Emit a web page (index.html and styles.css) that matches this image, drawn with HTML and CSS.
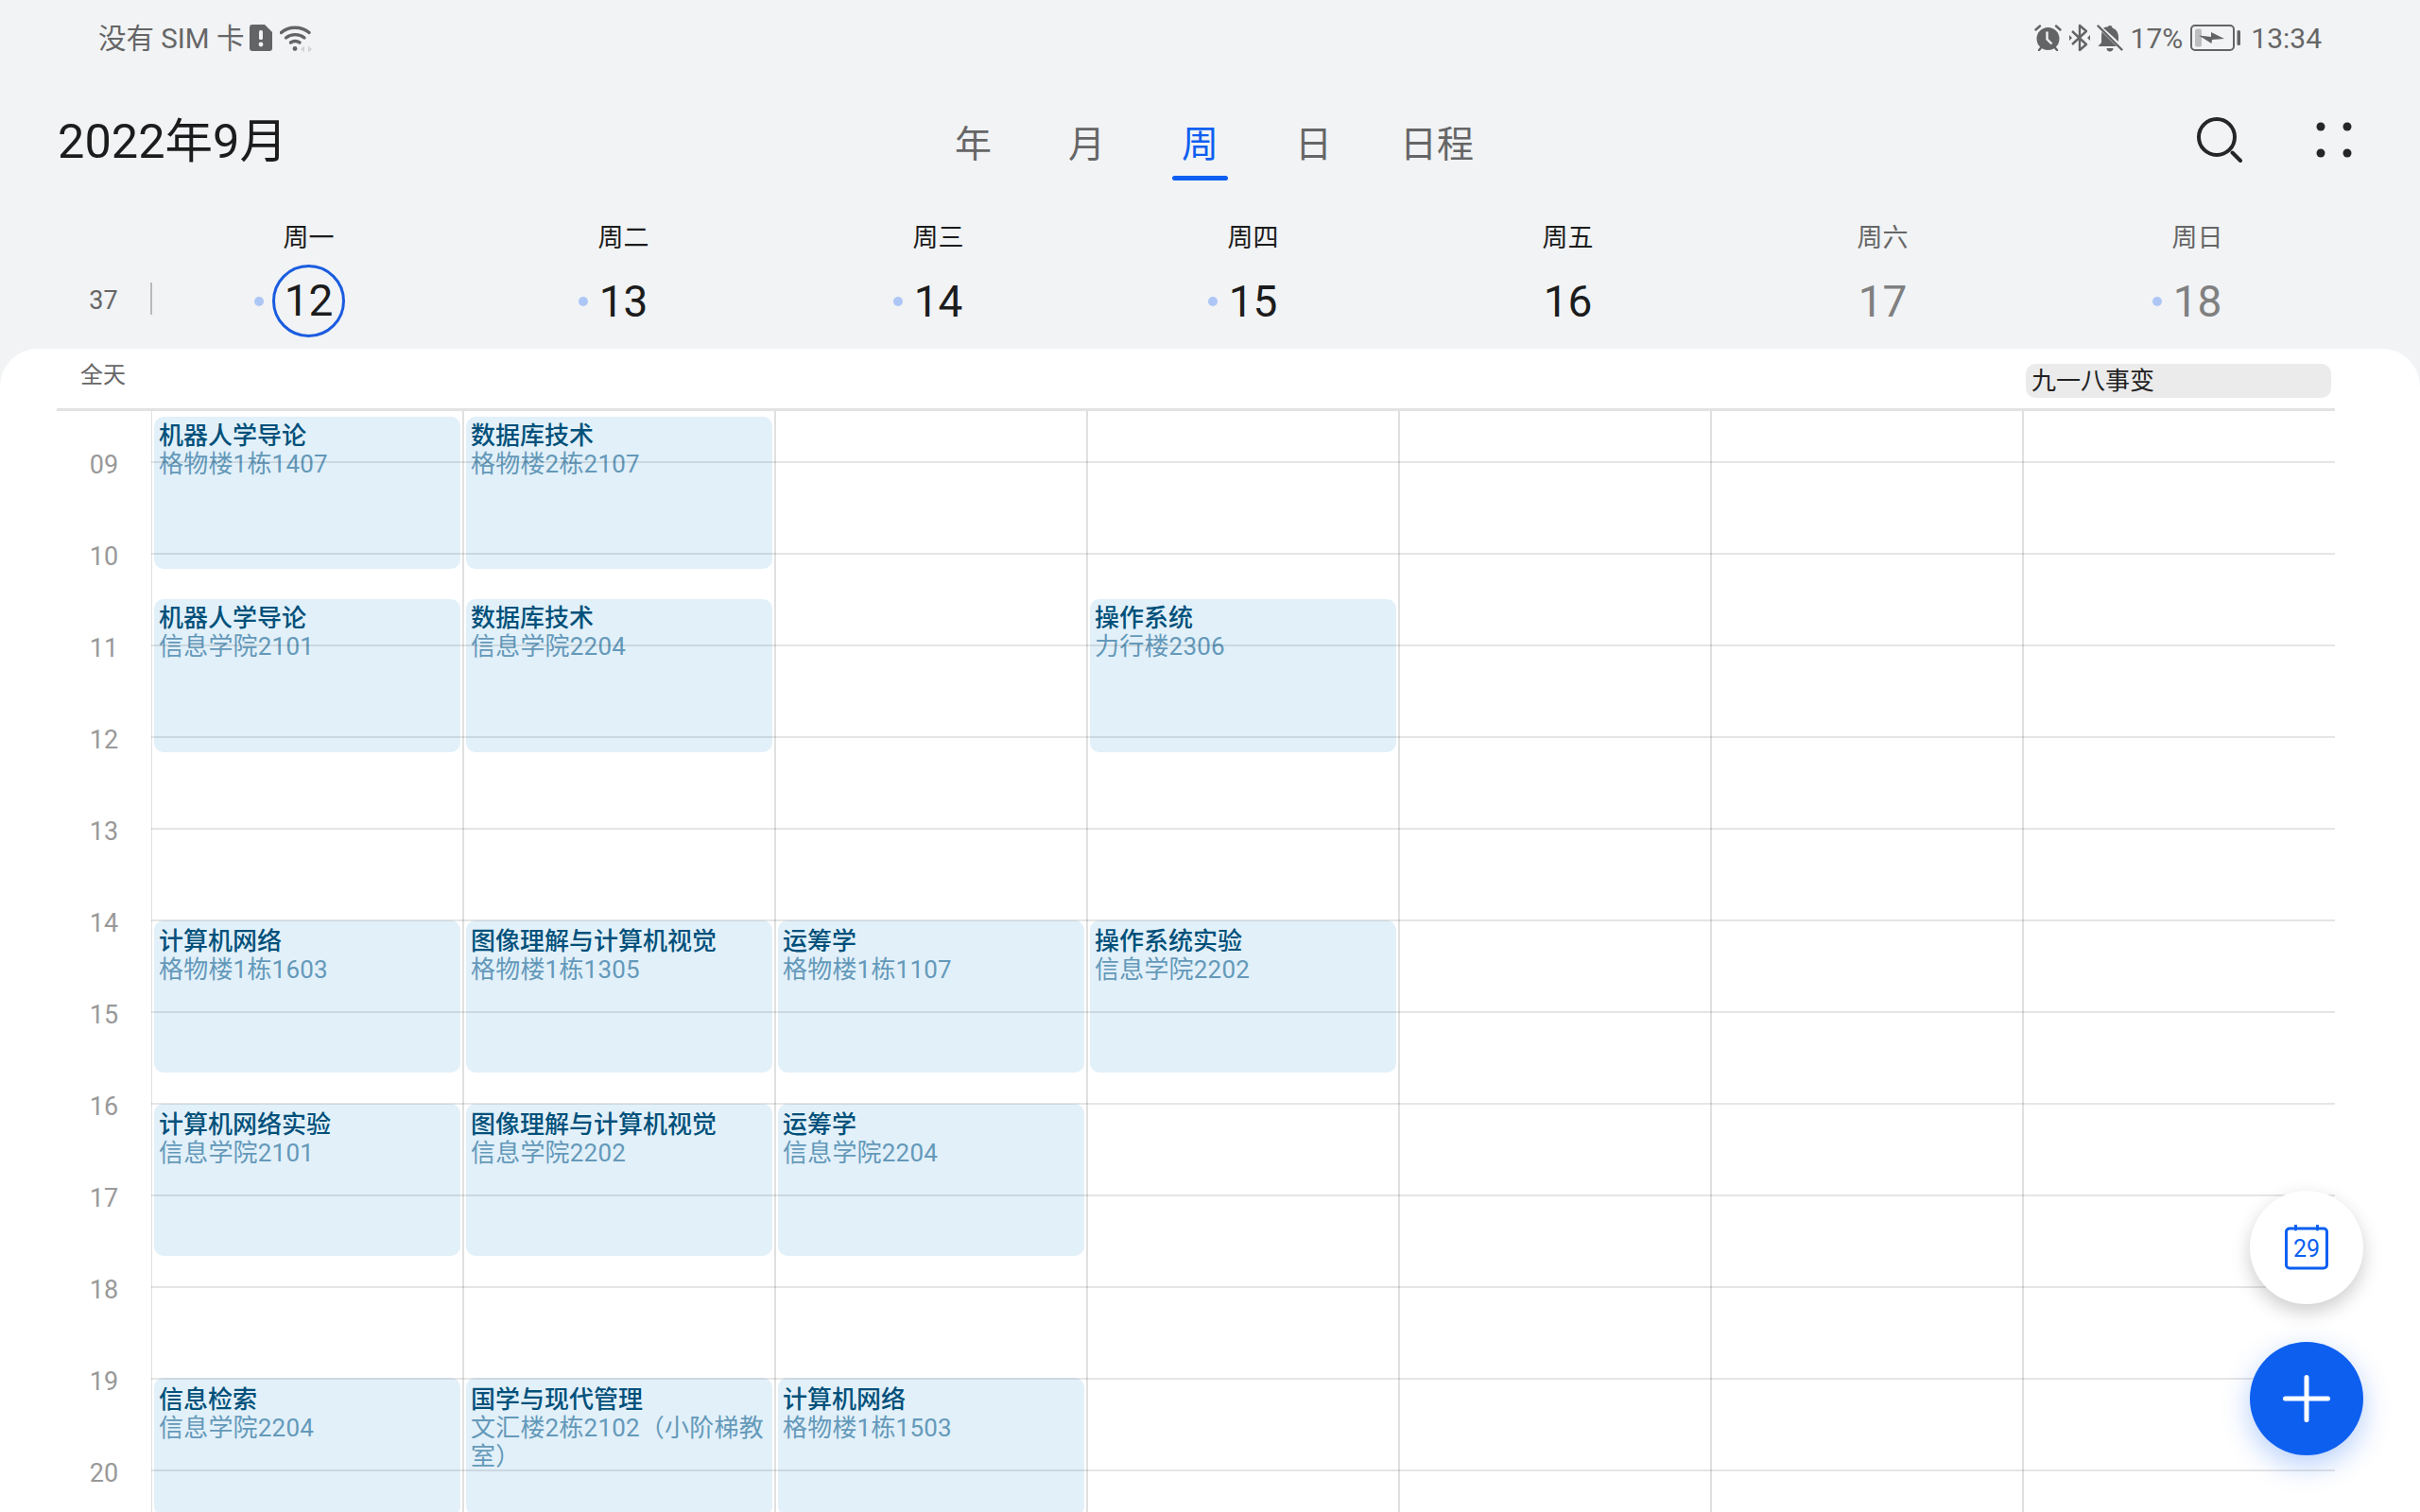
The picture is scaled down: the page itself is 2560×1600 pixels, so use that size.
FILE: index.html
```html
<!DOCTYPE html>
<html lang="zh-CN">
<head>
    <meta charset="UTF-8">
    <meta name="viewport" content="width=device-width, initial-scale=1.0">
    <title>日历</title>
    <link rel="stylesheet" href="styles.css">
</head>
<body>
    <div class="page">
        <div class="status-bar">
            <div class="status-group">
                <span class="status-text carrier">没有 SIM 卡</span>
                <svg class="sim-icon" width="24" height="28" viewBox="0 0 24 28">
                    <path d="M3 0h13l8 8v17a3 3 0 0 1-3 3H3a3 3 0 0 1-3-3V3a3 3 0 0 1 3-3z" fill="#636466"/>
                    <rect x="10" y="6" width="4" height="10" rx="1.6" fill="#f1f3f5"/>
                    <circle cx="12" cy="21" r="2.4" fill="#f1f3f5"/>
                </svg>
                <svg width="34" height="29" viewBox="0 0 34 29" fill="none" stroke="#636466" stroke-width="3.4" stroke-linecap="round">
                    <path d="M1.500 8.500C9 1.500 23 1.500 31 8.500"/>
                    <path d="M6.500 14C12 9.500 20.500 9.500 26 14"/>
                    <path d="M11.500 19C14.500 17 18 17 21 19"/>
                    <circle cx="16" cy="25.500" r="2.400" fill="#636466" stroke="none"/>
                    <path d="M26 22.500l-4 3.500 4 3.500zM30 22.500l4 3.500-4 3.500z" fill="#d2d3d5" stroke="none"/>
                </svg>
            </div>
            <div class="status-group">
                <svg width="29" height="28" viewBox="0 0 29 28">
                    <circle cx="14.500" cy="15" r="12" fill="#636466"/>
                    <path d="M13.500 7.500v8l5 5" fill="none" stroke="#f1f3f5" stroke-width="2.400"/>
                    <path d="M1.500 5.500L6 1.500M27.500 5.500L23 1.500M5 27l2.500-3M24 27l-2.500-3" fill="none" stroke="#636466" stroke-width="2.400" stroke-linecap="round"/>
                </svg>
                <svg class="bt-icon" width="22" height="30" viewBox="0 0 22 30" fill="none" stroke="#636466" stroke-width="2.400" stroke-linejoin="round">
                    <path d="M3 8l15 14-7 6V2l7 6L3 22"/>
                    <path d="M0 12l3 3-3 3zM22 12l-3 3 3 3z" fill="#636466" stroke="none"/>
                </svg>
                <svg class="bell-icon" width="28" height="29" viewBox="0 0 28 29">
                    <path d="M14 1a2.500 2.500 0 0 1 2.500 2.500C21 5 23 9 23 13v5L7 3.500C8 3 10 2.500 11.500 2.500A2.500 2.500 0 0 1 14 1zM5.500 7.500L21 23H1.500l3.500-4v-6c0-2 .2-3.800.5-5.500zM10.500 25h7a3.500 3.500 0 0 1-7 0z" fill="#636466"/>
                    <path d="M1.500 1.500L26.500 26.500" stroke="#636466" stroke-width="2.400" stroke-linecap="round"/>
                </svg>
                <span class="status-text">17%</span>
                <svg width="54" height="28" viewBox="0 0 54 28">
                    <rect x="1" y="1" width="45" height="26" rx="4" fill="none" stroke="#636466" stroke-width="2"/>
                    <rect x="5" y="4.500" width="7" height="19" rx="2" fill="#bdbec0"/>
                    <path d="M9 11.500L22 13V8l14 7-13 1-.5 4z" fill="#636466"/>
                    <rect x="49.500" y="6" width="3.500" height="16" rx="1.500" fill="#636466"/>
                </svg>
                <span class="status-text clock">13:34</span>
            </div>
        </div>

        <div class="toolbar">
            <div class="month-title">2022年9月</div>
            <div class="tabs">
                <span class="tab">年</span>
                <span class="tab">月</span>
                <span class="tab active">周</span>
                <span class="tab">日</span>
                <span class="tab tab-agenda">日程</span>
            </div>
            <div class="tool-icons">
                <svg width="50" height="50" viewBox="0 0 50 50" fill="none" stroke="#262626" stroke-width="4">
                    <circle cx="23" cy="22" r="19"/>
                    <path d="M39.500 38.500L48 47" stroke-linecap="round"/>
                </svg>
                <svg width="38" height="38" viewBox="0 0 38 38" fill="#262626">
                    <circle cx="5" cy="5" r="4.500"/>
                    <circle cx="33" cy="5" r="4.500"/>
                    <circle cx="5" cy="33" r="4.500"/>
                    <circle cx="33" cy="33" r="4.500"/>
                </svg>
            </div>
        </div>

        <div class="week-head">
            <div class="week-no"><span>37</span></div>
            <div class="day-head">
                <div class="day-name">周一</div>
                <div class="date today"><i class="dot"></i>12</div>
            </div>
            <div class="day-head">
                <div class="day-name">周二</div>
                <div class="date"><i class="dot"></i>13</div>
            </div>
            <div class="day-head">
                <div class="day-name">周三</div>
                <div class="date"><i class="dot"></i>14</div>
            </div>
            <div class="day-head">
                <div class="day-name">周四</div>
                <div class="date"><i class="dot"></i>15</div>
            </div>
            <div class="day-head">
                <div class="day-name">周五</div>
                <div class="date">16</div>
            </div>
            <div class="day-head weekend">
                <div class="day-name">周六</div>
                <div class="date">17</div>
            </div>
            <div class="day-head weekend">
                <div class="day-name">周日</div>
                <div class="date"><i class="dot"></i>18</div>
            </div>
        </div>

        <div class="sheet">
            <div class="all-day">
                <span class="all-day-label">全天</span>
                <span class="holiday">九一八事变</span>
            </div>
            <div class="timetable">
                <div class="hours">
                    <span>09</span><span>10</span><span>11</span><span>12</span>
                    <span>13</span><span>14</span><span>15</span><span>16</span>
                    <span>17</span><span>18</span><span>19</span><span>20</span>
                </div>
                <div class="day-grid">
                    <div class="course col-1 at-0830"><b>机器人学导论</b><p>格物楼1栋1407</p></div>
                    <div class="course col-2 at-0830"><b>数据库技术</b><p>格物楼2栋2107</p></div>

                    <div class="course col-1 at-1030"><b>机器人学导论</b><p>信息学院2101</p></div>
                    <div class="course col-2 at-1030"><b>数据库技术</b><p>信息学院2204</p></div>
                    <div class="course col-4 at-1030"><b>操作系统</b><p>力行楼2306</p></div>

                    <div class="course col-1 at-1400"><b>计算机网络</b><p>格物楼1栋1603</p></div>
                    <div class="course col-2 at-1400"><b>图像理解与计算机视觉</b><p>格物楼1栋1305</p></div>
                    <div class="course col-3 at-1400"><b>运筹学</b><p>格物楼1栋1107</p></div>
                    <div class="course col-4 at-1400"><b>操作系统实验</b><p>信息学院2202</p></div>

                    <div class="course col-1 at-1600"><b>计算机网络实验</b><p>信息学院2101</p></div>
                    <div class="course col-2 at-1600"><b>图像理解与计算机视觉</b><p>信息学院2202</p></div>
                    <div class="course col-3 at-1600"><b>运筹学</b><p>信息学院2204</p></div>

                    <div class="course col-1 at-1900"><b>信息检索</b><p>信息学院2204</p></div>
                    <div class="course col-2 at-1900"><b>国学与现代管理</b><p>文汇楼2栋2102（小阶梯教室）</p></div>
                    <div class="course col-3 at-1900"><b>计算机网络</b><p>格物楼1栋1503</p></div>

                    <div class="hour-lines"></div>
                </div>
            </div>
        </div>

        <div class="fab fab-today">
            <svg width="46" height="48" viewBox="0 0 46 48">
                <rect x="1.500" y="4" width="43" height="42" rx="3.500" fill="none" stroke="#0d5ff0" stroke-width="3"/>
                <path d="M11.500 1v4M34.500 1v4" stroke="#0d5ff0" stroke-width="3" stroke-linecap="round"/>
                <text x="23" y="34" class="fab-date">29</text>
            </svg>
        </div>
        <div class="fab fab-add">
            <svg width="50" height="50" viewBox="0 0 50 50" stroke="#fff" stroke-width="5" stroke-linecap="round">
                <path d="M25 2.500v45M2.500 25h45"/>
            </svg>
        </div>
    </div>
</body>
</html>
```
FILE: styles.css
```css
* {
    box-sizing: border-box;
}
body {
    margin: 0;
    background: #f1f3f5;
    font-family: Roboto, "Noto Sans CJK SC", sans-serif;
}
svg {
    display: block;
    flex: none;
}
.page {
    position: relative;
    display: flex;
    flex-direction: column;
    width: 2560px;
    height: 1600px;
    overflow: hidden;
}

/* Status bar */
.status-bar {
    display: flex;
    justify-content: space-between;
    align-items: center;
    height: 80px;
    padding: 0 104px 0 104px;
}
.status-group {
    display: flex;
    align-items: center;
    gap: 8px;
}
.status-text {
    padding-top: 2px;
    font-size: 30px;
    line-height: 36px;
    color: #666;
}
.carrier {
    font-size: 29.5px;
}
.sim-icon {
    margin-left: -2px;
}
.bt-icon {
    margin-left: 0.5px;
}
.bell-icon {
    margin-left: -1.5px;
}
.clock {
    margin-left: 2px;
}

/* Title, view tabs and tools */
.toolbar {
    display: grid;
    grid-template-columns: 1fr auto 1fr;
    align-items: center;
    height: 136px;
    padding: 0 72px 0 61px;
}
.month-title {
    margin-top: 4px;
    font-size: 50.5px;
    line-height: 60px;
    color: #1c1c1c;
}
.tabs {
    display: flex;
    gap: 81px;
    margin: 10px 0 0 20px;
}
.tab {
    position: relative;
    font-size: 39px;
    line-height: 56px;
    color: #666;
}
.tab-agenda {
    margin-left: -9px;
}
.tab.active {
    color: #0d5ff0;
}
.tab.active::after {
    content: "";
    position: absolute;
    left: -10px;
    right: -10px;
    bottom: -10px;
    height: 5px;
    border-radius: 3px;
    background: #0d5ff0;
}
.tool-icons {
    display: flex;
    justify-content: flex-end;
    align-items: center;
    gap: 78px;
}

/* Week header */
.week-head {
    display: flex;
    height: 153px;
    padding-top: 16px;
}
.week-no {
    display: flex;
    align-items: center;
    width: 161px;
    height: 34px;
    margin: 67px -1px 0 0;
    padding: 4px 0 0 61px;
    border-right: 2px solid #b8b9bb;
    font-size: 27px;
    color: #666;
}
.week-no span {
    width: 97px;
    text-align: center;
}
.day-head {
    width: 333px;
    text-align: center;
    color: #1c1c1c;
}
.day-name {
    font-size: 27px;
    line-height: 40px;
}
.date {
    position: relative;
    display: inline-block;
    margin-top: 8px;
    font-size: 46px;
    line-height: 78px;
}
.dot {
    position: absolute;
    top: 34px;
    right: 100%;
    width: 10px;
    height: 10px;
    margin-right: 12px;
    border-radius: 50%;
    background: #adc6f5;
}
.today {
    width: 77px;
    height: 77px;
    border: 3px solid #1a5cdf;
    border-radius: 50%;
    line-height: 71px;
}
.today .dot {
    top: 31px;
    margin-right: 12px;
}
.weekend {
    color: #666;
}
.weekend .date {
    color: #808080;
}

/* White sheet with the timetable */
.sheet {
    flex: 1;
    min-height: 0;
    background: #fff;
    border-radius: 40px 40px 0 0;
}
.all-day {
    display: flex;
    justify-content: space-between;
    width: 2410px;
    height: 66px;
    margin-left: 60px;
    padding: 16px 4px 0 25px;
    border-bottom: 3px solid #e2e2e2;
}
.all-day-label {
    font-size: 24px;
    line-height: 24px;
    color: #666;
}
.holiday {
    width: 323px;
    height: 36px;
    padding-left: 6px;
    border-radius: 10px;
    background: #ebebeb;
    font-size: 26px;
    line-height: 36px;
    color: #222;
}
.timetable {
    display: flex;
}
.hours {
    display: flex;
    flex-direction: column;
    width: 160px;
    padding: 9px 0 0 61px;
}
.hours span {
    width: 98px;
    height: 97px;
    font-size: 27px;
    line-height: 97px;
    text-align: center;
    color: #999;
}
.day-grid {
    position: relative;
    display: grid;
    grid-template-columns: repeat(7, 330px);
    grid-template-rows: repeat(72, 16.1667px);
    width: 2310px;
    height: 1165px;
    padding-top: 5.5px;
    background: repeating-linear-gradient(to right, #e0e0e0 0 1px, transparent 1px 329px, #e0e0e0 329px 330px) no-repeat;
    background-size: 2309px 100%;
}
.hour-lines {
    position: absolute;
    top: 53px;
    left: 0;
    right: 0;
    bottom: 0;
    background: repeating-linear-gradient(to bottom, rgba(0, 0, 0, 0.1) 0 2px, transparent 2px 97px);
}

/* Courses: one grid row is ten minutes */
.course {
    grid-row-end: span 10;
    margin: 0 3px 0 3px;
    padding: 5px 4px 0 5px;
    border-radius: 10px;
    background: #e2f0f9;
    font-size: 26px;
    line-height: 30px;
    overflow: hidden;
}
.course b {
    display: block;
    font-weight: 500;
    color: #00507a;
}
.course p {
    margin: 0;
    letter-spacing: 0.2px;
    color: #6499b9;
}
.col-1 { grid-column: 1; }
.col-2 { grid-column: 2; }
.col-3 { grid-column: 3; }
.col-4 { grid-column: 4; }
.at-0830 { grid-row-start: 1; }
.at-1030 { grid-row-start: 13; }
.at-1400 { grid-row-start: 34; padding-top: 7px; }
.at-1600 { grid-row-start: 46; padding-top: 7px; }
.at-1900 { grid-row-start: 64; padding-top: 8px; }

/* Floating buttons */
.fab {
    position: absolute;
    left: 2380px;
    display: flex;
    justify-content: center;
    align-items: center;
    width: 120px;
    height: 120px;
    border-radius: 50%;
}
.fab-today {
    top: 1260px;
    background: #fff;
    box-shadow: 0 8px 20px rgba(0, 0, 0, 0.2);
}
.fab-add {
    top: 1420px;
    background: #0d5ff0;
    box-shadow: 0 10px 30px rgba(13, 95, 240, 0.3);
}
.fab-date {
    font-family: Roboto, sans-serif;
    font-size: 25px;
    font-weight: 400;
    text-anchor: middle;
    fill: #0d5ff0;
}
```
